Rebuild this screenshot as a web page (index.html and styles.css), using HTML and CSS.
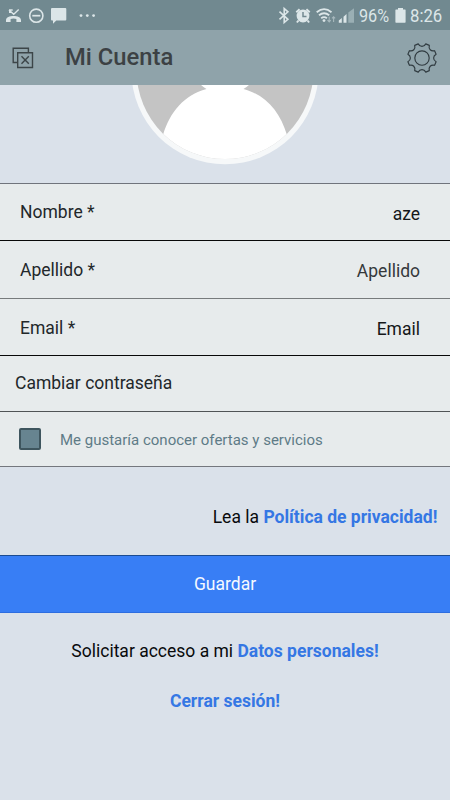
FILE: index.html
```html
<!DOCTYPE html>
<html lang="es">
<head>
<meta charset="utf-8">
<title>Mi Cuenta</title>
<link rel="stylesheet" href="styles.css">
</head>
<body>
<div class="status">
  <svg class="notifications" width="100" height="30" viewBox="0 0 100 30" fill="none" stroke="#dce6e8">
    <path d="M9 10l4.700 4.200 5-4.700M9.700 13V10h3" stroke-width="1.4"/>
    <path d="M6 20.200c0-5.500 15-5.500 15 0v1.800h-4.600v-3c-1.700-.7-4.100-.7-5.800 0v3H6z" fill="#dce6e8" stroke="none"/>
    <circle cx="36.3" cy="15.7" r="6.600" stroke-width="1.6"/>
    <path d="M32.3 15.700h8" stroke-width="1.7"/>
    <path d="M52 8h13.300q1 0 1 1v10.500q0 1-1 1h-9L53 23.700v-3.200h-1q-1 0-1-1V9q0-1 1-1z" fill="#dce6e8" stroke="none"/>
    <g fill="#dce6e8" stroke="none"><circle cx="81" cy="15.600" r="1.400"/><circle cx="87.300" cy="15.600" r="1.400"/><circle cx="93.600" cy="15.600" r="1.400"/></g>
  </svg>
  <svg class="signals" width="80" height="30" viewBox="275 0 80 30" fill="none" stroke="#dce6e8">
    <path d="M279.5 11.700l8.400 7.600-3.700 3.200V8.600l3.700 3.200-8.400 7.500" stroke-width="1.6"/>
    <circle cx="303" cy="16" r="6.400" fill="#dce6e8" stroke="none"/>
    <path d="M296.3 12.200l3.300-3M309.700 12.200l-3.300-3M298.500 20.500l-1.600 2M307.500 20.500l1.600 2" stroke-width="2"/>
    <path d="M303 12v4.600h3.500" stroke="#718990" stroke-width="1.5"/>
    <path d="M316.7 12.200q7.400-6.200 14.800 0M319 15.300q5.100-4.200 10.200 0M321.200 18.300q2.900-2.200 5.700 0" stroke-width="1.8"/>
    <circle cx="324" cy="20.600" r="1.400" fill="#dce6e8" stroke="none"/>
    <path d="M329.2 16.700v5.200m-1.700-1.700l1.700 1.700 1.500-1.700M333.600 22v-5.300m-1.600 1.700l1.600-1.700 1.500 1.700" stroke="#a7b8bd" stroke-width="1.1"/>
    <path d="M338.8 22.800v-2.300l3-2.500v4.800zM343.500 22.800v-6l3-2.800v8.800z" fill="#dce6e8" stroke="none"/>
    <path d="M348.3 22.800V12.500l5.700-4.300v14.600z" fill="#9aafb4" stroke="none"/>
  </svg>
  <span class="percent">96%</span>
  <svg class="battery" width="11" height="16" viewBox="0 0 11 16"><path d="M3 1h5v1.500h2q.6 0 .6.6V15q0 .7-.6.7H1q-.6 0-.6-.7V3.100q0-.6.6-.6h2z" fill="#dce6e8"/></svg>
  <span class="time">8:26</span>
</div>
<header class="bar">
  <svg class="close" width="22" height="22" viewBox="0 0 22 22" fill="none" stroke="#3c4548" stroke-width="1.4"><path d="M5 15.500H1.200V1.200h15.200v4"/><path d="M5.700 5.700h14.800v14.800H5.700zM9.500 9.300l7.300 7.500M16.800 9.300l-7.300 7.500"/></svg>
  <h1 class="title">Mi Cuenta</h1>
  <svg class="gear" width="32" height="32" viewBox="-16 -16 32 32" fill="none" stroke="#303b40" stroke-width="1.15" stroke-linejoin="round">
    <circle r="7.200"/>
    <path d="M-3.800 -14.100C-2 -10.800 2 -10.800 3.800 -14.100L7.300 -12.600C6.300 -9 9 -6.300 12.600 -7.300L14.100 -3.800C10.800 -2 10.800 2 14.100 3.800L12.600 7.300C9 6.300 6.300 9 7.300 12.600L3.800 14.100C2 10.800 -2 10.800 -3.800 14.100L-7.300 12.600C-6.300 9 -9 6.300 -12.600 7.300L-14.100 3.800C-10.800 2 -10.800 -2 -14.100 -3.800L-12.600 -7.300C-9 -6.300 -6.300 -9 -7.300 -12.600Z"/>
  </svg>
</header>
<section class="photo">
  <svg width="190" height="98" viewBox="130 85 190 98">
    <defs><clipPath id="inner"><circle cx="225" cy="70.700" r="88.400"/></clipPath></defs>
    <circle cx="225" cy="70.700" r="93.600" fill="#f6f8f9"/>
    <g clip-path="url(#inner)">
      <path d="M130 80h190v90H130z" fill="#c4c4c4"/>
      <path d="M200 84q3 3 6.500 5C184 95 170 112 163 135v35h124v-35C280 112 266 95 243.500 89q3.500-2 6.500-5z" fill="#fff"/>
    </g>
  </svg>
</section>
<main>
  <div class="row field first"><span>Nombre *</span><span class="value">aze</span></div>
  <div class="row field"><span>Apellido *</span><span class="value muted">Apellido</span></div>
  <div class="row field third"><span>Email *</span><span class="value">Email</span></div>
  <div class="row password">Cambiar contraseña</div>
  <div class="row offers"><span class="check"></span><span class="offer-text">Me gustaría conocer ofertas y servicios</span></div>
  <p class="privacy">Lea la <b>Política de privacidad!</b></p>
  <div class="save">Guardar</div>
  <p class="access">Solicitar acceso a mi <b>Datos personales!</b></p>
  <p class="logout"><b>Cerrar sesión!</b></p>
</main>
</body>
</html>
```

FILE: styles.css
```css
* { box-sizing: border-box; }
body { margin: 0; height: 800px; overflow: hidden; background: #dae1ea; color: #22272a; font: 17.5px/20px Roboto, sans-serif; }
svg { display: block; flex: none; }
.status { height: 30px; display: flex; align-items: center; background: #718990; color: #dce6e8; }
.signals { margin-left: 175px; }
.percent { width: 30px; margin-left: 4px; font-size: 18px; line-height: 30px; padding-top: 2px; transform: scaleX(.9); transform-origin: left; white-space: nowrap; }
.battery { margin-left: 6px; }
.time { margin-left: 4px; font-size: 19px; line-height: 30px; padding-top: 2px; transform: scaleX(.88); transform-origin: left; white-space: nowrap; }
.bar { height: 55px; display: flex; align-items: center; background: #8fa3aa; }
.close { margin-left: 12px; }
.title { margin: 0 auto 0 31px; padding-bottom: 1px; font-size: 23.8px; line-height: 30px; font-weight: 500; color: #3c4144; white-space: nowrap; }
.gear { margin-right: 12px; }
.photo { height: 98px; display: flex; justify-content: center; }
.row { display: flex; align-items: center; background: #e7ebec; border-bottom: 1px solid #6c7072; }
.field { height: 58px; padding: 0 30px 0 20px; justify-content: space-between; border-bottom-color: #777b7c; }
.first { border-top: 1px solid #70747c; border-bottom-color: #080808; }
.first .value { padding-top: 3px; }
.third { height: 57px; padding-top: 1px; border-bottom-color: #080808; }
.value { padding-top: 2px; color: #151719; }
.muted { color: #35393b; }
.password { height: 56px; padding: 0 0 1px 15px; border-bottom-color: #505456; }
.offers { height: 55px; padding-left: 19px; border-bottom-color: #74777d; }
.check { width: 22px; height: 22px; border: 2px solid #3e555e; border-radius: 2px; background: #678490; }
.offer-text { margin-left: 19px; padding-top: 2px; font-size: 15px; color: #5e7b87; }
p { margin: 0; color: #080a0c; white-space: nowrap; }
b { color: #3577e4; }
.privacy { height: 88px; padding: 40px 12.6px 0 0; text-align: right; }
.save { height: 58px; border-top: 1px solid #1b4b91; border-bottom: 1px solid #2d6de0; display: flex; align-items: center; justify-content: center; background: #387ef5; color: #f4f9ff; }
.access { height: 50px; padding-top: 28px; text-align: center; }
.logout { padding-top: 28px; text-align: center; }
```
